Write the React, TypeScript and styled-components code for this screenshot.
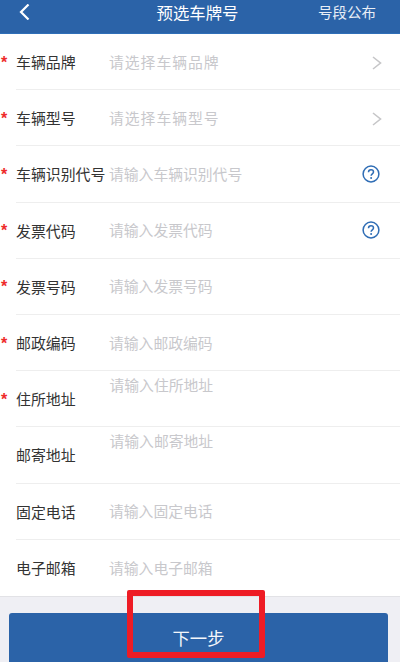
import React from "react";
import styled, { createGlobalStyle } from "styled-components";

const Global = createGlobalStyle`
  html, body { margin: 0; padding: 0; background: #fff; }
  * { box-sizing: border-box; }
  body { font-family: "Noto Sans CJK SC", "Liberation Sans", sans-serif; }
`;

const Page = styled.div`
  position: relative;
  width: 400px;
  height: 662px;
  overflow: hidden;
  display: flex;
  flex-direction: column;
  background: #fff;
`;

const Header = styled.header`
  height: 34px;
  flex: none;
  background: #2b63a8;
  border-bottom: 1px solid #2f6fb8;
  display: grid;
  grid-template-columns: 1fr auto 1fr;
  align-items: center;
  padding: 0 24px 10px 19px;
  color: #fff;
`;

const BackButton = styled.button`
  border: 0;
  background: none;
  padding: 0;
  width: 12px;
  height: 16px;
  display: flex;
  color: #fff;
`;

const Title = styled.h1`
  margin: 0;
  font-size: 16.4px;
  font-weight: 400;
  line-height: 24px;
`;

const HeaderLink = styled.a`
  justify-self: end;
  font-size: 14.5px;
  line-height: 22px;
  color: #e8eef6;
`;

const Form = styled.main`
  flex: none;
`;

const Row = styled.div`
  height: 56.2px;
  margin-left: 16px;
  padding-right: 20px;
  display: flex;
  align-items: center;
  border-bottom: 1px solid #eeeeee;
  position: relative;
  &:last-child { border-bottom: 0; }
`;

const Star = styled.span`
  position: absolute;
  left: -15px;
  top: 50%;
  margin-top: -8px;
  font-size: 16px;
  line-height: 18px;
  font-family: "Liberation Sans", sans-serif;
  font-weight: 700;
  color: #ee2b2b;
`;

const Label = styled.label`
  width: 93px;
  flex: none;
  font-size: 14.9px;
  color: #333333;
  white-space: nowrap;
`;

const Placeholder = styled.span<{ $wide?: boolean; $top?: boolean }>`
  flex: 1;
  font-size: 14.8px;
  color: #c8c8cc;
  white-space: nowrap;
  letter-spacing: ${(p) => (p.$wide ? "1px" : "0")};
  align-self: ${(p) => (p.$top ? "flex-start" : "center")};
  margin-top: ${(p) => (p.$top ? "3px" : "-1px")};
  margin-left: ${(p) => (p.$top ? "0.5px" : "0")};
`;

const ChevronSlot = styled.span`
  display: flex;
  margin-right: -3px;
`;

const Footer = styled.footer`
  flex: 1;
  background: #efeff4;
  border-top: 1px solid #e2e2e6;
  padding: 16px 12px 0 9px;
`;

const NextButton = styled.button`
  width: 100%;
  height: 60px;
  border: 0;
  border-radius: 3px;
  background: #2b63a8;
  color: #f4f7fb;
  font-family: inherit;
  font-size: 17.3px;
  padding: 0 0 11px;
`;

const Highlight = styled.div`
  position: absolute;
  left: 127px;
  top: 590px;
  width: 138px;
  height: 68px;
  border: 6px solid #ee1c25;
  border-radius: 2px;
  pointer-events: none;
`;

const Chevron = () => (
  <ChevronSlot>
    <svg width="12" height="16" viewBox="0 0 12 16" fill="none">
      <path d="M2 3l7.500 6-7.500 6" stroke="#c6c6c8" strokeWidth="1.600" />
    </svg>
  </ChevronSlot>
);

const Help = () => (
  <svg width="18" height="18" viewBox="0 0 18 18" fill="none">
    <circle cx="9" cy="9" r="7.900" stroke="#2f6db5" strokeWidth="1.500" />
    <path d="M6.500 7.200c0-1.500 1.100-2.400 2.500-2.400s2.500.9 2.500 2.200c0 1.800-2.400 1.900-2.400 3.800" stroke="#2f6db5" strokeWidth="1.500" />
    <circle cx="9.100" cy="13" r="1" fill="#2f6db5" />
  </svg>
);

type Field = { label: string; hint: string; req?: boolean; wide?: boolean; top?: boolean; end?: "chevron" | "help" };

const fields: Field[] = [
  { label: "车辆品牌", hint: "请选择车辆品牌", req: true, wide: true, end: "chevron" },
  { label: "车辆型号", hint: "请选择车辆型号", req: true, wide: true, end: "chevron" },
  { label: "车辆识别代号", hint: "请输入车辆识别代号", req: true, end: "help" },
  { label: "发票代码", hint: "请输入发票代码", req: true, end: "help" },
  { label: "发票号码", hint: "请输入发票号码", req: true },
  { label: "邮政编码", hint: "请输入邮政编码", req: true },
  { label: "住所地址", hint: "请输入住所地址", req: true, top: true },
  { label: "邮寄地址", hint: "请输入邮寄地址", top: true },
  { label: "固定电话", hint: "请输入固定电话" },
  { label: "电子邮箱", hint: "请输入电子邮箱" },
];

export default function App() {
  return (
    <Page>
      <Global />
      <Header>
        <BackButton aria-label="返回">
          <svg width="12" height="16" viewBox="0 0 12 16" fill="none">
            <path d="M9.500 .5L2 8l7.500 7.500" stroke="#fff" strokeWidth="2.200" />
          </svg>
        </BackButton>
        <Title>预选车牌号</Title>
        <HeaderLink>号段公布</HeaderLink>
      </Header>
      <Form>
        {fields.map((f) => (
          <Row key={f.label}>
            {f.req && <Star>*</Star>}
            <Label>{f.label}</Label>
            <Placeholder $wide={f.wide} $top={f.top}>{f.hint}</Placeholder>
            {f.end === "chevron" && <Chevron />}
            {f.end === "help" && <Help />}
          </Row>
        ))}
      </Form>
      <Footer>
        <NextButton>下一步</NextButton>
      </Footer>
      <Highlight />
    </Page>
  );
}
